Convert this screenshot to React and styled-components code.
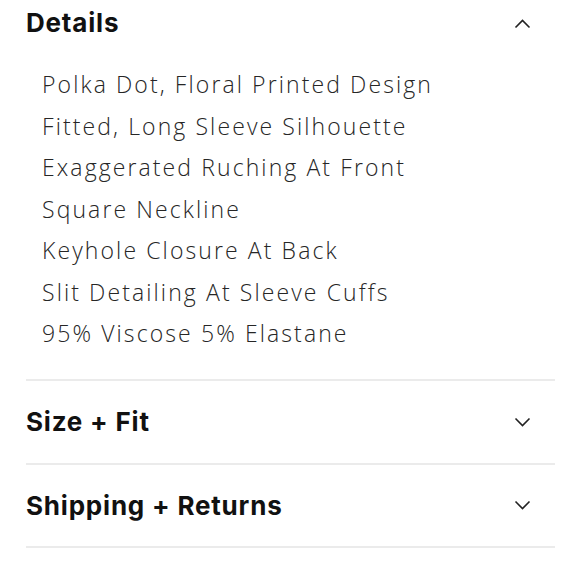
import React from "react";
import styled, { createGlobalStyle } from "styled-components";

const Global = createGlobalStyle`
  html, body { margin: 0; padding: 0; background: #fff; }
  body { font-family: "Inter", "Liberation Sans", sans-serif; }
`;

const Accordion = styled.div`
  width: 580px;
  height: 580px;
  overflow: hidden;
  box-sizing: border-box;
  padding: 0 25px 0 26px;
`;

const Stack = styled.div`
  margin-top: -18px;
`;

const Section = styled.section`
  border-bottom: 2px solid #ebebeb;
`;

const Header = styled.div`
  height: ${(p) => (p.$tall ? "82px" : "81px")};
  display: flex;
  align-items: center;
  justify-content: space-between;
`;

const Title = styled.h2`
  margin: 0;
  font-family: "Inter", "Liberation Sans", sans-serif;
  font-weight: 700;
  font-size: 26px;
  letter-spacing: 0.8px;
  color: #111;
`;

const Chevron = styled.svg`
  width: 17px;
  height: 10px;
  margin-right: 24px;
  margin-top: ${(p) => (p.$up ? "2px" : "0")};
`;

const List = styled.ul`
  list-style: none;
  margin: 0;
  padding: 1px 0 24px 16px;
`;

const Item = styled.li`
  font-family: "Open Sans", "Liberation Sans", sans-serif;
  font-weight: 300;
  font-size: 23px;
  line-height: 41.5px;
  letter-spacing: 2.1px;
  color: #262626;
  white-space: nowrap;
`;

const ChevronIcon = ({ up }) => (
  <Chevron $up={up} viewBox="0 0 17 10" fill="none">
    <path
      d={up ? "M1.5 8.5 L8.5 1.5 L15.5 8.5" : "M1.5 1.5 L8.5 8.5 L15.5 1.5"}
      stroke="#222"
      strokeWidth="1.6"
    />
  </Chevron>
);

const details = [
  "Polka Dot, Floral Printed Design",
  "Fitted, Long Sleeve Silhouette",
  "Exaggerated Ruching At Front",
  "Square Neckline",
  "Keyhole Closure At Back",
  "Slit Detailing At Sleeve Cuffs",
  "95% Viscose 5% Elastane",
];

export default function App() {
  return (
    <>
      <Global />
      <Accordion>
        <Stack>
          <Section>
            <Header>
              <Title>Details</Title>
              <ChevronIcon up />
            </Header>
            <List>
              {details.map((d) => (
                <Item key={d}>{d}</Item>
              ))}
            </List>
          </Section>
          <Section>
            <Header $tall>
              <Title>Size + Fit</Title>
              <ChevronIcon />
            </Header>
          </Section>
          <Section>
            <Header>
              <Title>Shipping + Returns</Title>
              <ChevronIcon />
            </Header>
          </Section>
        </Stack>
      </Accordion>
    </>
  );
}
